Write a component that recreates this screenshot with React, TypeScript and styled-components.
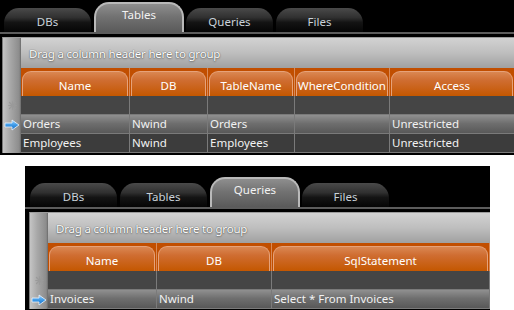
import React from 'react'
import styled, { createGlobalStyle } from 'styled-components'

const GlobalStyle = createGlobalStyle`
  html, body {
    margin: 0;
    padding: 0;
    background: #ffffff;
  }
  body {
    font-family: "Noto Sans", "Open Sans", sans-serif;
    font-size: 11px;
  }
`

interface Column {
    title: string;
    width: number;
}

type RowKind = 'new' | 'current' | 'plain';

interface GridRow {
    kind: RowKind;
    cells: string[];
}

interface GridWindowProps {
    tabs: string[];
    active: number;
    columns: Column[];
    rows: GridRow[];
    width: number;
    height: number;
    offset: number;
    top: number;
    tabStart: number;
    panelStart: number;
}

function NewRowMark() {
    return (
        <svg width="9" height="9" viewBox="0 0 9 9">
            <g stroke="#9a9a9a" strokeWidth="1.2" strokeLinecap="round">
                <line x1="1.5" y1="1.5" x2="7.5" y2="7.5" />
                <line x1="7.5" y1="1.5" x2="1.5" y2="7.5" />
                <line x1="4.5" y1="0.8" x2="4.5" y2="8.2" />
                <line x1="0.8" y1="4.5" x2="8.2" y2="4.5" />
            </g>
        </svg>
    )
}

function CurrentRowMark() {
    return (
        <svg width="16" height="12" viewBox="0 0 16 12">
            <defs>
                <linearGradient id="arrowFill" x1="0" y1="0" x2="0" y2="1">
                    <stop offset="0" stopColor="#9fd4ff" />
                    <stop offset="0.5" stopColor="#3d9ae8" />
                    <stop offset="1" stopColor="#1c6cc0" />
                </linearGradient>
            </defs>
            <path d="M1 4 H8 V1 L15 6 L8 11 V8 H1 Z" fill="url(#arrowFill)" stroke="#e8f4ff" strokeWidth="0.8" strokeLinejoin="round" />
        </svg>
    )
}

function GridWindow(props: GridWindowProps): JSX.Element {
    const template = props.columns.map((c) => `${c.width}px`).join(' ')
    return (
        <Window $width={props.width} $height={props.height} $offset={props.offset}>
            <TabStrip $top={props.top} $start={props.tabStart}>
                {props.tabs.map((t, i) => (
                    <Tab key={t} $active={i === props.active}>
                        <TabLabel $active={i === props.active}>{t}</TabLabel>
                    </Tab>
                ))}
            </TabStrip>
            <Panel $start={props.panelStart}>
                <Strip>
                    <StripCell $h={30} />
                    <StripCell $h={28} />
                    {props.rows.map((r, i) => (
                        <StripCell key={i} $h={19}>
                            {r.kind === 'new' && <NewRowMark />}
                            {r.kind === 'current' && <CurrentRowMark />}
                        </StripCell>
                    ))}
                </Strip>
                <Main>
                    <GroupBar>Drag a column header here to group</GroupBar>
                    <HeaderRow $template={template}>
                        {props.columns.map((c) => (
                            <HeaderCell key={c.title}>
                                <HeaderTab>{c.title}</HeaderTab>
                            </HeaderCell>
                        ))}
                    </HeaderRow>
                    {props.rows.map((r, i) => (
                        <DataRow key={i} $template={template} $kind={r.kind}>
                            {props.columns.map((c, j) => (
                                <DataCell key={c.title}>{r.cells[j] ?? ''}</DataCell>
                            ))}
                        </DataRow>
                    ))}
                </Main>
            </Panel>
        </Window>
    )
}

export default function App(): JSX.Element {
    const tabs = ['DBs', 'Tables', 'Queries', 'Files']
    return (
        <Page>
            <GlobalStyle />
            <GridWindow
                tabs={tabs}
                active={1}
                width={514}
                height={155}
                offset={0}
                top={2}
                tabStart={4}
                panelStart={2}
                columns={[
                    { title: 'Name', width: 109 },
                    { title: 'DB', width: 78 },
                    { title: 'TableName', width: 87 },
                    { title: 'WhereCondition', width: 95 },
                    { title: 'Access', width: 125 },
                ]}
                rows={[
                    { kind: 'new', cells: [] },
                    { kind: 'current', cells: ['Orders', 'Nwind', 'Orders', '', 'Unrestricted'] },
                    { kind: 'plain', cells: ['Employees', 'Nwind', 'Employees', '', 'Unrestricted'] },
                ]}
            />
            <GridWindow
                tabs={tabs}
                active={2}
                width={465}
                height={150}
                offset={25}
                top={11}
                tabStart={5}
                panelStart={4}
                columns={[
                    { title: 'Name', width: 109 },
                    { title: 'DB', width: 115 },
                    { title: 'SqlStatement', width: 218 },
                ]}
                rows={[
                    { kind: 'new', cells: [] },
                    { kind: 'current', cells: ['Invoices', 'Nwind', 'Select * From Invoices'] },
                ]}
            />
        </Page>
    )
}

const Page = styled.div`
    width: 514px;
    height: 310px;
    overflow: hidden;
    display: flex;
    flex-direction: column;
    gap: 11px;
`

const Window = styled.div<{ $width: number; $height: number; $offset: number }>`
    width: ${(p) => p.$width}px;
    height: ${(p) => p.$height}px;
    flex-shrink: 0;
    margin-left: ${(p) => p.$offset}px;
    background: #000;
    overflow: hidden;
    display: flex;
    flex-direction: column;
`

const TabStrip = styled.div<{ $top: number; $start: number }>`
    display: flex;
    align-items: flex-end;
    gap: 2px;
    height: ${(p) => p.$top + 32}px;
    padding-left: ${(p) => p.$start}px;
    border-bottom: 2px solid #5c5c5c;
    box-sizing: border-box;
    flex-shrink: 0;
`

const Tab = styled.div<{ $active: boolean }>`
    width: ${(p) => (p.$active ? 90 : 87)}px;
    height: ${(p) => (p.$active ? 30 : 24)}px;
    margin-right: ${(p) => (p.$active ? 0 : 1)}px;
    border-radius: 15px 15px 0 0;
    box-sizing: border-box;
    display: flex;
    justify-content: center;
    border: ${(p) => (p.$active ? '2px solid #b9b9b9' : 'none')};
    border-bottom: none;
    background: ${(p) =>
        p.$active
            ? 'linear-gradient(#8e8e8e 0%, #727272 45%, #5a5a5a 100%)'
            : 'linear-gradient(#4a4a4a 0%, #303030 40%, #141414 60%, #050505 100%)'};
`

const TabLabel = styled.span<{ $active: boolean }>`
    margin-top: ${(p) => (p.$active ? 4 : 7)}px;
    color: ${(p) => (p.$active ? '#f2f2f2' : '#c9d2da')};
    font-size: 11.5px;
    line-height: 14px;
`

const Panel = styled.div<{ $start: number }>`
    display: flex;
    margin-top: 3px;
    margin-left: ${(p) => p.$start}px;
    border-top: 1px solid #9c9c9c;
    border-left: 1px solid #7a7a7a;
`

const Strip = styled.div`
    width: 18px;
    flex-shrink: 0;
    display: flex;
    flex-direction: column;
    background: linear-gradient(to right, #c4c4c4 0%, #a8a8a8 40%, #8c8c8c 90%, #6a6a6a 100%);
`

const StripCell = styled.div<{ $h: number }>`
    height: ${(p) => p.$h}px;
    display: flex;
    align-items: center;
    justify-content: center;
    box-sizing: border-box;
`

const Main = styled.div`
    flex: 1;
    display: flex;
    flex-direction: column;
    min-width: 0;
`

const GroupBar = styled.div`
    height: 30px;
    display: flex;
    align-items: center;
    padding-left: 8px;
    color: #ffffff;
    font-size: 11.5px;
    letter-spacing: -0.2px;
    text-shadow: 0 0 1px rgba(0, 0, 0, 0.7), 0 1px 2px rgba(0, 0, 0, 0.3);
    background: linear-gradient(#d2d2d2 0%, #bebebe 50%, #a0a0a0 100%);
`

const HeaderRow = styled.div<{ $template: string }>`
    height: 28px;
    display: grid;
    grid-template-columns: ${(p) => p.$template};
    background: #c14e00;
`

const HeaderCell = styled.div`
    display: flex;
    padding: 3px 1px 0 1px;
    border-right: 1px solid #d88a58;
`

const HeaderTab = styled.div`
    flex: 1;
    display: flex;
    align-items: center;
    justify-content: center;
    padding-top: 2px;
    color: #ffffff;
    font-size: 11.5px;
    border: 1px solid #e6a27a;
    border-bottom: none;
    border-radius: 9px 9px 0 0;
    background: linear-gradient(#da8752 0%, #cf6d31 35%, #c45700 100%);
`

const DataRow = styled.div<{ $template: string; $kind: RowKind }>`
    height: 19px;
    display: grid;
    grid-template-columns: ${(p) => p.$template};
    background: ${(p) =>
        p.$kind === 'current'
            ? 'linear-gradient(#909090 0%, #6e6e6e 45%, #565656 100%)'
            : p.$kind === 'new'
            ? '#454545'
            : '#3c3c3c'};
`

const DataCell = styled.div`
    box-sizing: border-box;
    border-right: 1px solid #7a7a7a;
    border-bottom: 1px solid #7a7a7a;
    padding-left: 2px;
    color: #f2f2f2;
    font-size: 11.5px;
    line-height: 18px;
    white-space: nowrap;
    overflow: hidden;
`
